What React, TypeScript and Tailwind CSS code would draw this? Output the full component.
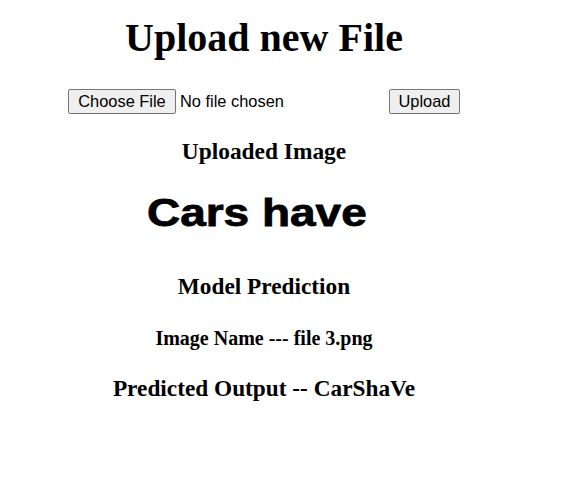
export default function App() {
  return (
    <div className="w-[528px] flex flex-col items-center text-black bg-white">
      <h1 className="mt-[17.5px] h-[40px] leading-[40px] text-[40px] font-bold font-['Liberation_Serif',serif] whitespace-nowrap">
        Upload new File
      </h1>
      <div className="mt-[31.5px] flex items-center h-[25px] font-['Liberation_Sans',Arial,sans-serif] text-[16.4px] text-black">
        <div className="w-[317px] flex items-center">
          <button className="w-[108px] h-[25px] bg-[#efefef] border border-[#767676] rounded-[2px] flex items-center justify-center leading-none">
            Choose File
          </button>
          <span className="ml-[4px] whitespace-nowrap">No file chosen</span>
        </div>
        <button className="ml-[4px] w-[71px] h-[25px] bg-[#efefef] border border-[#767676] rounded-[2px] flex items-center justify-center leading-none">
          Upload
        </button>
      </div>
      <h2 className="mt-[23.2px] h-[28px] leading-[28px] text-[23.4px] font-bold font-['Liberation_Serif',serif] whitespace-nowrap">
        Uploaded Image
      </h2>
      <div className="mt-[28.6px] h-[38px] mr-[15px] flex items-center justify-center">
        <span className="inline-block scale-x-[1.21] leading-[38px] text-[38px] font-bold font-['Liberation_Sans',Arial,sans-serif] whitespace-nowrap [-webkit-text-stroke:0.8px_black]">
          Cars have
        </span>
      </div>
      <h2 className="mt-[40.4px] h-[28px] leading-[28px] text-[23.3px] font-bold font-['Liberation_Serif',serif] whitespace-nowrap">
        Model Prediction
      </h2>
      <h3 className="mt-[26px] h-[24px] leading-[24px] text-[20px] font-bold font-['Liberation_Serif',serif] whitespace-nowrap">
        Image Name --- file 3.png
      </h3>
      <h2 className="mt-[24px] h-[28px] leading-[28px] text-[23.3px] font-bold font-['Liberation_Serif',serif] whitespace-nowrap">
        Predicted Output -- CarShaVe
      </h2>
    </div>
  );
}
